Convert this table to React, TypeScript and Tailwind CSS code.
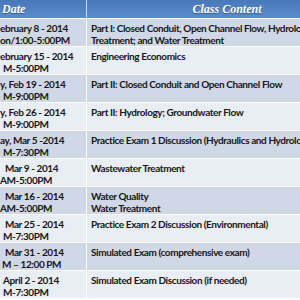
const rows = [
  { date: ['ebruary 8 - 2014', 'on/1:00-5:00PM'], pad: ['pl-0', 'pl-0'], content: ['Part I: Closed Conduit, Open Channel Flow, Hydrology;', 'Treatment; and Water Treatment'] },
  { date: ['ebruary 15 - 2014', 'M-5:00PM'], pad: ['pl-0', 'pl-[3px]'], content: ['Engineering Economics'] },
  { date: ['y, Feb 19 - 2014', 'M-9:00PM'], pad: ['pl-0', 'pl-[3px]'], content: ['Part II: Closed Conduit and Open Channel Flow'] },
  { date: ['y, Feb 26 - 2014', 'M-9:00PM'], pad: ['pl-0', 'pl-[3px]'], content: ['Part II: Hydrology; Groundwater Flow'] },
  { date: ['ay, Mar 5 -2014', 'M-7:30PM'], pad: ['pl-0', 'pl-[3px]'], content: ['Practice Exam 1 Discussion (Hydraulics and Hydrology)'] },
  { date: ['Mar 9 - 2014', 'AM-5:00PM'], pad: ['pl-[5px]', 'pl-0'], content: ['Wastewater Treatment'] },
  { date: ['Mar 16 - 2014', 'AM-5:00PM'], pad: ['pl-[5px]', 'pl-0'], content: ['Water Quality', 'Water Treatment'] },
  { date: ['Mar 25 - 2014', 'M-7:30PM'], pad: ['pl-[5px]', 'pl-[3px]'], content: ['Practice Exam 2 Discussion (Environmental)'] },
  { date: ['Mar 31 - 2014', 'M \u2013 12:00 PM'], pad: ['pl-[5px]', 'pl-[2px]'], content: ['Simulated Exam (comprehensive exam)'] },
  { date: ['April 2 - 2014', 'M-7:30PM'], pad: ['pl-[3px]', 'pl-[3px]'], content: ['Simulated Exam Discussion (if needed)'] },
];

export default function App() {
  return (
    <div className="w-[300px] h-[300px] overflow-hidden bg-white font-['Lato',sans-serif] text-[10px] leading-[12px] tracking-[-0.4px] font-bold text-[#161616]">
      {/* header */}
      <div className="flex h-[18px] bg-gradient-to-b from-[#4877ba] to-[#5b8dcc] text-white font-['Liberation_Serif',serif] italic text-[12px] leading-[18px] tracking-normal [text-shadow:0_1px_1px_rgba(0,0,0,0.35)]">
        <div className="w-[86px] shrink-0 pl-[2px]">Date</div>
        <div className="w-px bg-white/70 shrink-0" />
        <div className="w-[280px] shrink-0 text-center">Class Content</div>
      </div>

      {rows.map((r, i) => (
        <div
          key={i}
          className={`flex h-[28px] border-t border-white ${i % 2 === 0 ? 'bg-[#d0d8e8]' : 'bg-[#e9edf4]'}`}
        >
          <div className="w-[86px] shrink-0 pt-[3px] whitespace-nowrap overflow-hidden">
            {r.date.map((d, j) => (
              <div key={j} className={r.pad[j]}>{d}</div>
            ))}
          </div>
          <div className="w-px bg-white shrink-0" />
          <div className="flex-1 pl-[4px] pt-[3px] whitespace-nowrap overflow-hidden">
            {r.content.map((c, j) => (
              <div key={j}>{c}</div>
            ))}
          </div>
        </div>
      ))}
    </div>
  );
}
